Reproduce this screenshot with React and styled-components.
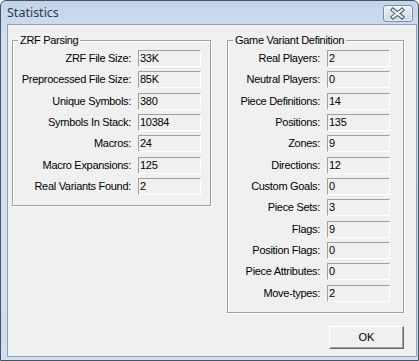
import React from "react";
import styled, { createGlobalStyle } from "styled-components";

const GlobalStyle = createGlobalStyle`
  html, body {
    margin: 0;
    padding: 0;
    background: #ffffff;
  }
  body {
    font-family: "Liberation Sans", Arial, sans-serif;
  }
`;

const zrfStats = [
  ["ZRF File Size:", "33K"],
  ["Preprocessed File Size:", "85K"],
  ["Unique Symbols:", "380"],
  ["Symbols In Stack:", "10384"],
  ["Macros:", "24"],
  ["Macro Expansions:", "125"],
  ["Real Variants Found:", "2"],
];

const variantStats = [
  ["Real Players:", "2"],
  ["Neutral Players:", "0"],
  ["Piece Definitions:", "14"],
  ["Positions:", "135"],
  ["Zones:", "9"],
  ["Directions:", "12"],
  ["Custom Goals:", "0"],
  ["Piece Sets:", "3"],
  ["Flags:", "9"],
  ["Position Flags:", "0"],
  ["Piece Attributes:", "0"],
  ["Move-types:", "2"],
];

function StatGroup({ title, rows, width, padRight }) {
  return (
    <Group $width={width}>
      <Legend>{title}</Legend>
      <StatGrid $padRight={padRight}>
        {rows.map(([label, value]) => (
          <React.Fragment key={label}>
            <Label>{label}</Label>
            <Field>{value}</Field>
          </React.Fragment>
        ))}
      </StatGrid>
    </Group>
  );
}

function App() {
  return (
    <>
      <GlobalStyle />
      <Window>
        <TitleBar>
          <Title>Statistics</Title>
          <CloseButton aria-label="Close">
            <svg width="28" height="15" viewBox="0 0 28 15">
              <path
                d="M9 4 L18 11 M18 4 L9 11"
                stroke="#4f5a6c"
                strokeWidth="4.2"
                strokeLinecap="square"
                fill="none"
              />
              <path
                d="M9 4 L18 11 M18 4 L9 11"
                stroke="#eef2f8"
                strokeWidth="2.2"
                strokeLinecap="square"
                fill="none"
              />
            </svg>
          </CloseButton>
        </TitleBar>
        <Client>
          <Groups>
            <StatGroup title="ZRF Parsing" rows={zrfStats} width={199} padRight={9} />
            <StatGroup
              title="Game Variant Definition"
              rows={variantStats}
              width={177}
              padRight={13}
            />
          </Groups>
          <ButtonRow>
            <OkButton>OK</OkButton>
          </ButtonRow>
        </Client>
      </Window>
    </>
  );
}

const Window = styled.div`
  width: 419px;
  height: 361px;
  box-sizing: border-box;
  border: 1px solid #47515f;
  border-radius: 6px 6px 0 0;
  background: linear-gradient(#c3d4ea, #d2dff0 40px, #d0ddee);
  display: flex;
  flex-direction: column;
  padding: 0 1px 3px 6px;
  overflow: hidden;
`;

const TitleBar = styled.div`
  height: 23px;
  display: flex;
  justify-content: space-between;
  align-items: flex-start;
  padding: 0 4px 0 0;
`;

const Title = styled.div`
  font-family: "Noto Sans", "Open Sans", sans-serif;
  font-size: 12.5px;
  line-height: 23px;
  color: #2c3a4f;
  padding-left: 0;
`;

const CloseButton = styled.div`
  margin-top: 4px;
  width: 30px;
  height: 17px;
  box-sizing: border-box;
  border: 1px solid #7d8da6;
  border-radius: 3px;
  background: linear-gradient(#eef3f9, #dbe4ef 50%, #cfdae8);
  box-shadow: inset 0 0 0 1px rgba(255, 255, 255, 0.55);
  display: flex;
  align-items: center;
  justify-content: center;
`;

const Client = styled.div`
  flex: 1;
  border: 1px solid #8fa2bd;
  background: #f0f0f0;
  padding: 15px 12px 0 4px;
  display: flex;
  flex-direction: column;
`;

const Groups = styled.div`
  display: flex;
  align-items: flex-start;
  gap: 16px;
`;

const Group = styled.div`
  position: relative;
  width: ${(p) => p.$width}px;
  box-sizing: border-box;
  border: 1px solid #a0a0a0;
  box-shadow: inset 1px 1px 0 #ffffff, 1px 1px 0 #ffffff;
`;

const Legend = styled.div`
  position: absolute;
  top: -7px;
  left: 5px;
  padding: 0 2px;
  background: #f0f0f0;
  font-size: 11px;
  letter-spacing: -0.3px;
  line-height: 13px;
  color: #000;
`;

const StatGrid = styled.div`
  display: grid;
  grid-template-columns: 1fr 63px;
  grid-auto-rows: 17px;
  column-gap: 7px;
  row-gap: 4.33px;
  padding: 9px ${(p) => p.$padRight}px 10px 0;
`;

const Label = styled.div`
  font-size: 11px;
  letter-spacing: -0.3px;
  line-height: 17px;
  text-align: right;
  color: #000;
  white-space: nowrap;
`;

const Field = styled.div`
  box-sizing: border-box;
  border: 1px solid;
  border-color: #a0a0a0 #ffffff #ffffff #a0a0a0;
  background: #f0f0f0;
  padding-left: 1px;
  font-size: 11px;
  letter-spacing: -0.3px;
  line-height: 15px;
  color: #000;
`;

const ButtonRow = styled.div`
  display: flex;
  justify-content: flex-end;
  margin-top: 13px;
`;

const OkButton = styled.div`
  width: 75px;
  height: 23px;
  box-sizing: border-box;
  border: 1px solid;
  border-color: #ffffff #696969 #696969 #ffffff;
  box-shadow: inset -1px -1px 0 #a0a0a0;
  background: #f0f0f0;
  font-size: 11px;
  line-height: 21px;
  text-align: center;
  color: #000;
`;

export default App;
